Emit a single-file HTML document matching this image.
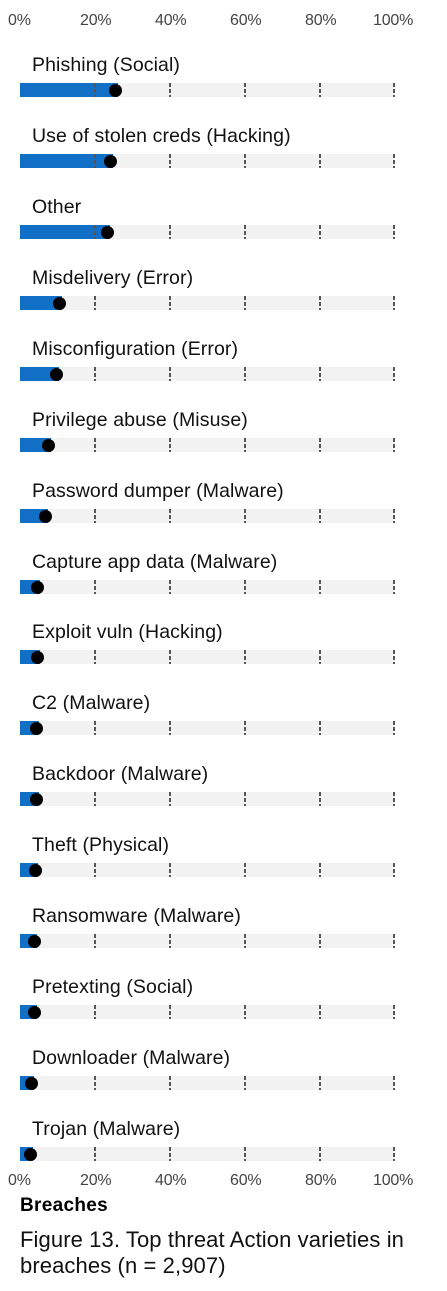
<!DOCTYPE html>
<html><head><meta charset="utf-8"><style>
body{margin:0;width:447px;height:1291px;background:#fff;font-family:"Liberation Sans",sans-serif;position:relative;overflow:hidden}
.ax{position:absolute;font-size:16px;color:#444;line-height:1;letter-spacing:-0.2px}
.lb{position:absolute;left:32px;font-size:19.5px;color:#111;line-height:1;letter-spacing:0.1px;white-space:nowrap}
.tr{position:absolute;left:20px;width:374px;height:14px;background:#f2f2f2}
.bl{position:absolute;left:20px;height:14px;background:#1170c6}
.dt{position:absolute;width:13px;height:13px;border-radius:50%;background:#000}
.tk{position:absolute;width:2px;height:14px;background:repeating-linear-gradient(#555 0 4px,transparent 4px 6px)}
</style></head><body>
<div id="c"></div>
<div style="position:absolute;left:20px;top:1195px;font-size:19px;font-weight:bold;letter-spacing:0.3px">Breaches</div>
<div style="position:absolute;left:20px;top:1227px;font-size:22px;line-height:26px;letter-spacing:0.1px;color:#111">Figure 13. Top threat Action varieties in<br>breaches (n = 2,907)</div>
<script>
var names=["Phishing (Social)","Use of stolen creds (Hacking)","Other","Misdelivery (Error)","Misconfiguration (Error)","Privilege abuse (Misuse)","Password dumper (Malware)","Capture app data (Malware)","Exploit vuln (Hacking)","C2 (Malware)","Backdoor (Malware)","Theft (Physical)","Ransomware (Malware)","Pretexting (Social)","Downloader (Malware)","Trojan (Malware)"];
var dx=[115,110,107,59,56,48,45,37,37,36,36,35,34,34,31,30];
var h="";
var xs=[20,95,170,245,320,394],pc=["0%","20%","40%","60%","80%","100%"];
for(var k=0;k<6;k++){var l=k==0?8:(k==5?xs[k]-21:xs[k]-15);h+='<div class="ax" style="left:'+l+'px;top:13px">'+pc[k]+'</div><div class="ax" style="left:'+l+'px;top:1173px">'+pc[k]+'</div>';}
for(var i=0;i<16;i++){var t=Math.round(83+i*70.93);
h+='<div class="lb" style="top:'+(t-27)+'px">'+names[i]+'</div>';
h+='<div class="tr" style="top:'+t+'px"></div>';
h+='<div class="bl" style="top:'+t+'px;width:'+(dx[i]-17)+'px"></div>';
for(var k=1;k<6;k++)h+='<div class="tk" style="top:'+t+'px;left:'+(xs[k]-1)+'px"></div>';
h+='<div class="dt" style="top:'+(t+1)+'px;left:'+(dx[i]-6)+'px"></div>';}
document.getElementById("c").innerHTML=h;
</script>
</body></html>
